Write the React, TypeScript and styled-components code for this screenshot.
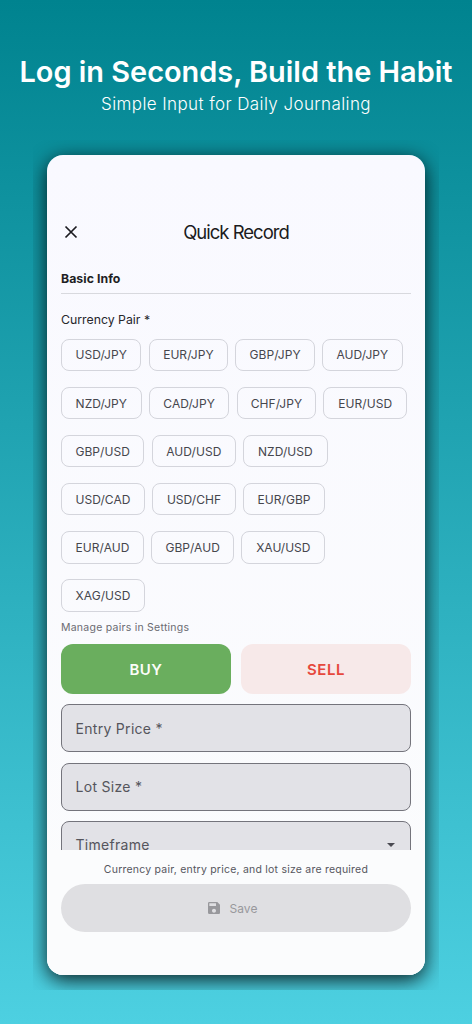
import React from "react";
import styled, { createGlobalStyle } from "styled-components";
import { MdSave } from "react-icons/md";

const GlobalStyle = createGlobalStyle`
  html, body {
    margin: 0;
    padding: 0;
  }
  * {
    box-sizing: border-box;
  }
`;

const Page = styled.div`
  width: 472px;
  height: 1024px;
  overflow: hidden;
  background: linear-gradient(180deg, #00838f 0%, #4dd0e1 100%);
  font-family: Inter, "Liberation Sans", sans-serif;
`;

const Hero = styled.div`
  height: 140px;
  padding-top: 53px;
  text-align: center;
  color: #fff;
`;

const Title = styled.h1`
  margin: 0;
  font-size: 28.9px;
  line-height: 37px;
  font-weight: 600;
  white-space: nowrap;
`;

const Subtitle = styled.p`
  margin: 0.5px 0 0;
  font-size: 17px;
  line-height: 26px;
  font-weight: 300;
  letter-spacing: 0.4px;
`;

const ShadowClip = styled.div`
  width: 406px;
  height: 850px;
  margin-left: 33px;
  padding: 15px 14.3px;
  overflow: hidden;
`;

const Card = styled.div`
  width: 377.4px;
  height: 820px;
  display: flex;
  flex-direction: column;
  border-radius: 16px;
  background: linear-gradient(180deg, #f9f9ff 0%, #fbfcfd 100%);
  box-shadow: 0 5px 20px rgba(0, 0, 0, 0.85);
  overflow: hidden;
`;

const Scroll = styled.div`
  height: 695px;
  flex: none;
  overflow: hidden;
  padding: 0 13.7px;
`;

const Header = styled.div`
  display: flex;
  align-items: center;
  height: 48px;
  margin-top: 53px;
  position: relative;
  justify-content: center;
`;

const CloseButton = styled.div`
  position: absolute;
  left: 2px;
  top: 16px;
  width: 16px;
  height: 16px;
  color: #1b1b20;
`;

const HeaderTitle = styled.div`
  font-size: 18.5px;
  line-height: 48px;
  color: #1b1b20;
  letter-spacing: -1px;
`;

const SectionTitle = styled.div`
  margin-top: 13px;
  padding-bottom: 4px;
  border-bottom: 1.5px solid #d8d9de;
  font-size: 12.3px;
  line-height: 20px;
  font-weight: 700;
  letter-spacing: 0.05px;
  color: #1f1f24;
`;

const FieldLabel = styled.div`
  margin-top: 15.5px;
  font-size: 12.3px;
  line-height: 20px;
  color: #27272c;
`;

const ChipGrid = styled.div`
  display: flex;
  flex-direction: column;
  gap: 15.7px;
  margin-top: 9.3px;
`;

const ChipRow = styled.div`
  display: flex;
  gap: 7.2px;
`;

const Chip = styled.div<{ $w: number }>`
  width: ${(p) => p.$w}px;
  height: 32.4px;
  display: flex;
  align-items: center;
  justify-content: center;
  border: 1px solid #d4d5dc;
  border-radius: 8px;
  font-size: 12px;
  letter-spacing: 0.05px;
  white-space: nowrap;
  color: #46464d;
`;

const Hint = styled.div`
  margin-top: 8.7px;
  font-size: 10.5px;
  line-height: 16px;
  letter-spacing: 0.25px;
  color: #6b6b72;
`;

const SideRow = styled.div`
  display: flex;
  gap: 10px;
  margin-top: 8px;
`;

const SideButton = styled.div<{ $buy?: boolean }>`
  flex: 1;
  height: 49.7px;
  display: flex;
  align-items: center;
  justify-content: center;
  border-radius: 12px;
  font-size: 15px;
  font-weight: 600;
  letter-spacing: 0.5px;
  background: ${(p) => (p.$buy ? "#6aae5e" : "#f7e9e9")};
  color: ${(p) => (p.$buy ? "#fbfdf9" : "#e6483d")};
`;

const Field = styled.div`
  height: 47.8px;
  margin-top: 10.5px;
  padding: 0 15.5px 0 13.5px;
  display: flex;
  align-items: center;
  justify-content: space-between;
  border: 1px solid #74747c;
  border-radius: 8px;
  background: #e2e2e7;
  font-size: 14px;
  letter-spacing: 0.3px;
  color: #55555c;
`;

const Caret = styled.div`
  width: 0;
  height: 0;
  border-left: 4.5px solid transparent;
  border-right: 4.5px solid transparent;
  border-top: 4.5px solid #4a4a52;
`;

const Footer = styled.div`
  flex: 1;
  padding: 12px 13.7px 0;
  background: #fbfcfd;
`;

const Required = styled.div`
  text-align: center;
  font-size: 10.5px;
  line-height: 16px;
  letter-spacing: 0.22px;
  color: #56565d;
`;

const SaveButton = styled.div`
  height: 48px;
  margin-top: 6px;
  padding-right: 8px;
  display: flex;
  align-items: center;
  justify-content: center;
  gap: 7px;
  border-radius: 24px;
  background: #dfdfe2;
  color: #98989c;
  font-size: 12px;
  letter-spacing: 0.1px;
`;

const rows: [string, number][][] = [
  [["USD/JPY", 80.4], ["EUR/JPY", 79.6], ["GBP/JPY", 79.6], ["AUD/JPY", 80.5]],
  [["NZD/JPY", 80.6], ["CAD/JPY", 80.7], ["CHF/JPY", 79.6], ["EUR/USD", 83.7]],
  [["GBP/USD", 83.4], ["AUD/USD", 84.5], ["NZD/USD", 84.3]],
  [["USD/CAD", 84], ["USD/CHF", 83.7], ["EUR/GBP", 82]],
  [["EUR/AUD", 83], ["GBP/AUD", 83], ["XAU/USD", 84]],
  [["XAG/USD", 84]],
];

export default function App() {
  return (
    <Page>
      <GlobalStyle />
      <Hero>
        <Title>Log in Seconds, Build the Habit</Title>
        <Subtitle>Simple Input for Daily Journaling</Subtitle>
      </Hero>
      <ShadowClip>
        <Card>
          <Scroll>
            <Header>
              <CloseButton>
                <svg width="16" height="16" viewBox="0 0 16 16" fill="none" stroke="currentColor" strokeWidth="1.7">
                  <path d="M2.5 2.5l11 11M13.5 2.5l-11 11" />
                </svg>
              </CloseButton>
              <HeaderTitle>Quick Record</HeaderTitle>
            </Header>
            <SectionTitle>Basic Info</SectionTitle>
            <FieldLabel>Currency Pair *</FieldLabel>
            <ChipGrid>
              {rows.map((row, i) => (
                <ChipRow key={i}>
                  {row.map(([name, w]) => (
                    <Chip key={name} $w={w}>
                      {name}
                    </Chip>
                  ))}
                </ChipRow>
              ))}
            </ChipGrid>
            <Hint>Manage pairs in Settings</Hint>
            <SideRow>
              <SideButton $buy>BUY</SideButton>
              <SideButton>SELL</SideButton>
            </SideRow>
            <Field>Entry Price *</Field>
            <Field>Lot Size *</Field>
            <Field>
              Timeframe
              <Caret />
            </Field>
          </Scroll>
          <Footer>
            <Required>Currency pair, entry price, and lot size are required</Required>
            <SaveButton>
              <MdSave size={16} />
              Save
            </SaveButton>
          </Footer>
        </Card>
      </ShadowClip>
    </Page>
  );
}
